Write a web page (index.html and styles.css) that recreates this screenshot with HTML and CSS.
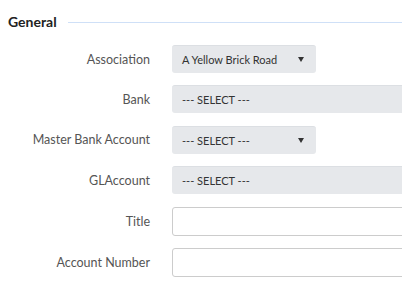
FILE: index.html
```html
<!DOCTYPE html>
<html lang="en">
<head>
    <meta charset="UTF-8">
    <title>General</title>
    <link rel="stylesheet" href="styles.css">
</head>
<body>
    <div class="section">
        <div class="section-head">
            <h3 class="section-title">General</h3>
            <div class="section-line"></div>
        </div>
        <div class="form">
            <div class="row">
                <label class="label">Association</label>
                <div class="select small">A Yellow Brick Road<span class="caret"></span></div>
            </div>
            <div class="row">
                <label class="label">Bank</label>
                <div class="select wide">--- SELECT ---</div>
            </div>
            <div class="row">
                <label class="label">Master Bank Account</label>
                <div class="select small">--- SELECT ---<span class="caret"></span></div>
            </div>
            <div class="row">
                <label class="label">GLAccount</label>
                <div class="select wide">--- SELECT ---</div>
            </div>
            <div class="row">
                <label class="label">Title</label>
                <input class="input" type="text">
            </div>
            <div class="row">
                <label class="label">Account Number</label>
                <input class="input" type="text">
            </div>
        </div>
    </div>
</body>
</html>
```

FILE: styles.css
```css
* {
    margin: 0;
    padding: 0;
    box-sizing: border-box;
}

body {
    background-color: #ffffff;
    font-family: Lato, "Open Sans", sans-serif;
}

.section {
    height: 291px;
    padding: 13px 0 0 8px;
    overflow: hidden;
}

.section-head {
    display: flex;
    align-items: center;
    gap: 11px;
    margin-bottom: 15px;
}

.section-title {
    font-size: 14px;
    font-weight: 700;
    color: #222;
}

.section-line {
    flex: 1;
    height: 1px;
    background-color: #cfe0f7;
    margin-top: 2px;
}

.form {
    display: flex;
    flex-direction: column;
    gap: 12.4px;
}

.row {
    display: flex;
    align-items: center;
    gap: 22px;
}

.label {
    flex: none;
    width: 142px;
    text-align: right;
    font-size: 12.5px;
    color: #555;
}

.select {
    flex: none;
    height: 28px;
    display: flex;
    align-items: center;
    padding: 0 10px;
    background-color: #e6e8eb;
    border-top: 1px solid #dcdfe3;
    border-radius: 3px;
    font-size: 11px;
    color: #333;
}

.small {
    width: 144px;
    justify-content: space-between;
}

.wide {
    width: 300px;
}

.caret {
    width: 0;
    height: 0;
    border-left: 3.5px solid transparent;
    border-right: 3.5px solid transparent;
    border-top: 5px solid #333;
    margin-right: 2px;
}

.input {
    flex: none;
    width: 300px;
    height: 29px;
    border: 1px solid #ccc;
    border-radius: 3px;
    background: #fff;
}
```
